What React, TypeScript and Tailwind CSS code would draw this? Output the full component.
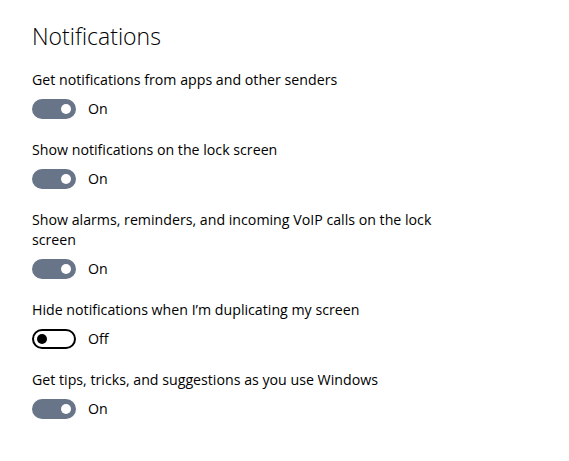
import { useState } from 'react';

interface SettingItem {
  label: string;
  on: boolean;
}

const initialSettings: SettingItem[] = [
  { label: 'Get notifications from apps and other senders', on: true },
  { label: 'Show notifications on the lock screen', on: true },
  { label: 'Show alarms, reminders, and incoming VoIP calls on the lock screen', on: true },
  { label: 'Hide notifications when I\u2019m duplicating my screen', on: false },
  { label: 'Get tips, tricks, and suggestions as you use Windows', on: true },
];

function Toggle({ on, onClick }: { on: boolean; onClick: () => void }) {
  return (
    <div className="flex items-center gap-3">
      <button
        onClick={onClick}
        className={
          on
            ? 'flex h-5 w-11 items-center justify-end rounded-full bg-[#687589] px-[5px]'
            : 'flex h-5 w-11 items-center justify-start rounded-full border-2 border-black bg-white px-[3px]'
        }
      >
        <span className={on ? 'h-[10px] w-[10px] rounded-full bg-white' : 'h-[10px] w-[10px] rounded-full bg-black'} />
      </button>
      <span className="text-[14.2px] leading-5">{on ? 'On' : 'Off'}</span>
    </div>
  );
}

export default function App() {
  const [settings, setSettings] = useState(initialSettings);

  const flip = (i: number) =>
    setSettings(s => s.map((item, j) => (j === i ? { ...item, on: !item.on } : item)));

  return (
    <div
      className="min-h-screen bg-white pl-8 pt-[20px] text-black"
      style={{ fontFamily: '"Open Sans", "Noto Sans", sans-serif' }}
    >
      <h1 className="text-[23px] font-light leading-8">Notifications</h1>
      <div className="mt-[18px] flex w-[420px] flex-col gap-[21px]">
        {settings.map((item, i) => (
          <div key={item.label} className="flex flex-col gap-[9px]">
            <p className="text-[14.2px] leading-5">{item.label}</p>
            <Toggle on={item.on} onClick={() => flip(i)} />
          </div>
        ))}
      </div>
    </div>
  );
}
